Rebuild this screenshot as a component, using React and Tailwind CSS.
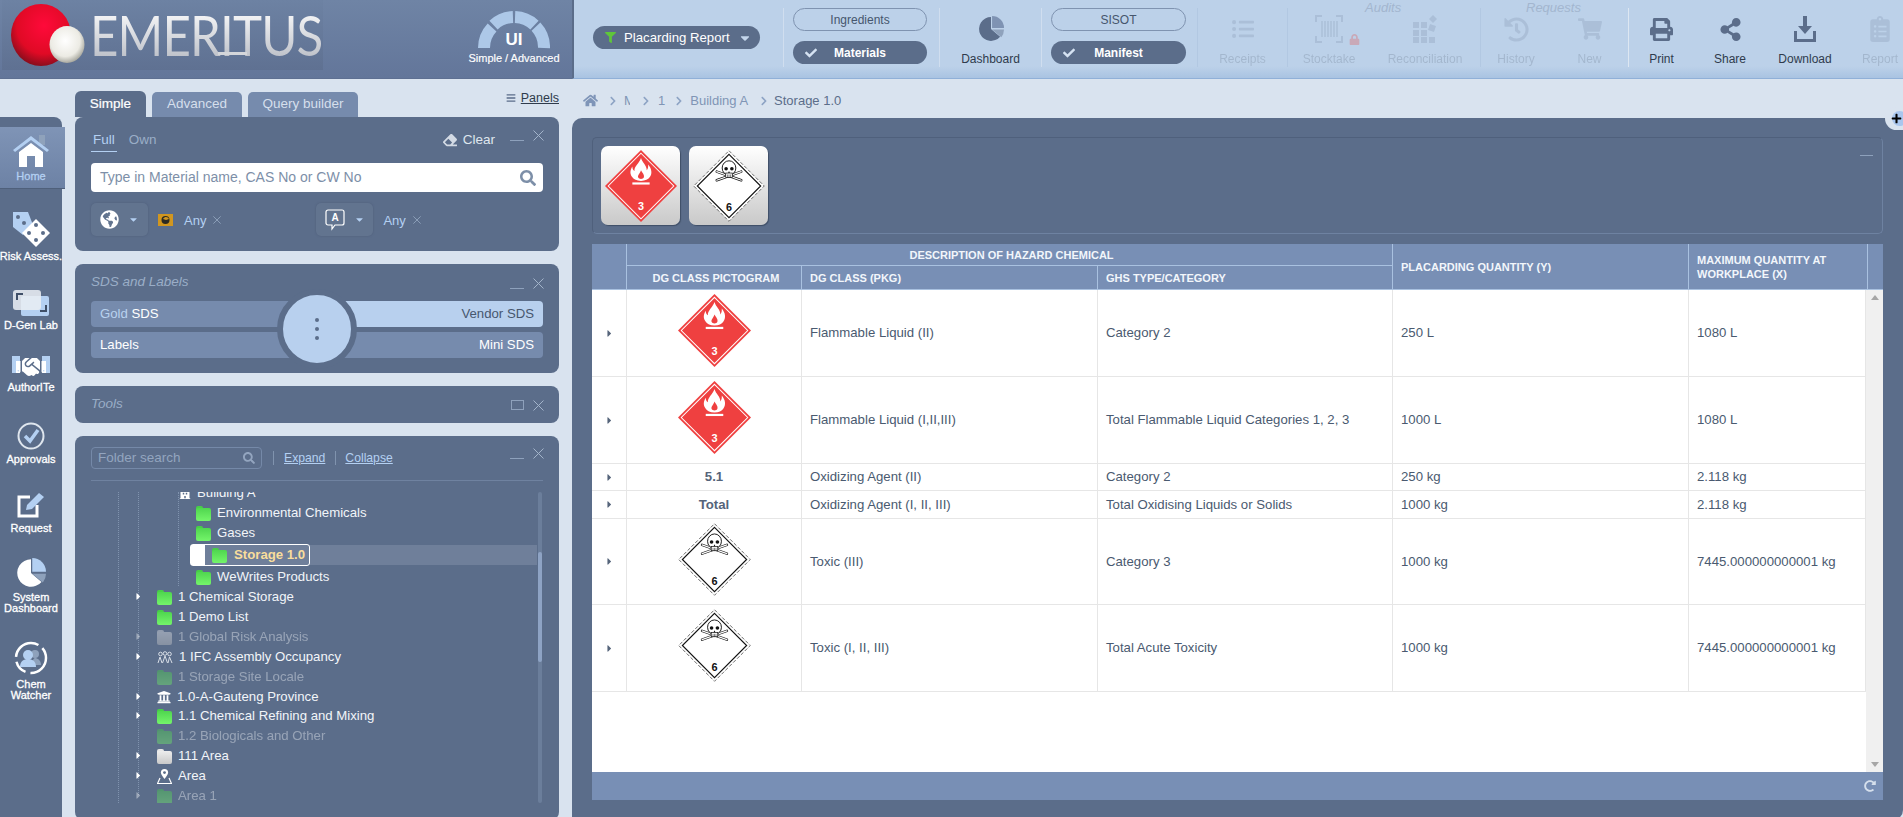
import {
  FaBars, FaBuilding, FaCaretDown, FaCaretRight, FaCheck, FaChevronRight, FaClipboardList, FaEraser, FaFilter,
  FaGlobeAmericas, FaHandshake, FaHistory, FaListUl, FaLock, FaPlus, FaPrint, FaRedoAlt, FaSearch,
  FaShareAlt, FaShoppingCart, FaUniversity, FaHome,
} from 'react-icons/fa';

function Cross({ size = 11, color = '#9db0c9', className = '' }) {
  return (
    <svg width={size} height={size} viewBox="0 0 11 11" className={`shrink-0 ${className}`}>
      <path d="M0.5 0.5L10.5 10.5M10.5 0.5L0.5 10.5" stroke={color} strokeWidth="1" fill="none" />
    </svg>
  );
}

function Pie({ size, main, a, b }) {
  return (
    <svg width={size} height={size} viewBox="0 0 24 24">
      <path d="M12 12V1A11 11 0 1 0 20.4 19.1Z" fill={main} />
      <path d="M13 11V0A11 11 0 0 1 24 11Z" fill={a} />
      <path d="M13 12.5H24A11 11 0 0 1 21.5 19.5Z" fill={b} />
    </svg>
  );
}

function Logo() {
  return (
    <div className="relative w-[321px] h-[70px] bg-gradient-to-b from-[#6d82a3] to-[#5f7192] shrink-0 ml-[2px]">
      <svg width="90" height="70" viewBox="0 0 90 70" className="absolute left-[5px] top-0">
        <defs>
          <radialGradient id="redBall" cx="55%" cy="35%" r="65%">
            <stop offset="0%" stopColor="#ff0a3a" />
            <stop offset="70%" stopColor="#e00a25" />
            <stop offset="100%" stopColor="#8c0d1c" />
          </radialGradient>
          <radialGradient id="whiteBall" cx="45%" cy="40%" r="65%">
            <stop offset="0%" stopColor="#ffffff" />
            <stop offset="65%" stopColor="#ecebe4" />
            <stop offset="100%" stopColor="#96968c" />
          </radialGradient>
        </defs>
        <ellipse cx="34" cy="35" rx="30" ry="31" fill="url(#redBall)" />
        <ellipse cx="60" cy="44.5" rx="17.5" ry="18.5" fill="url(#whiteBall)" />
      </svg>
      <span className="absolute left-[88px] top-[5px] font-['Lato'] font-normal text-[56px] leading-[60px] tracking-[-1px] origin-left scale-x-[0.88] text-transparent bg-clip-text bg-gradient-to-b from-white to-[#b5b9c2]">
        EMERITUS
      </span>
      <div className="absolute left-[216px] top-[52px] w-[29px] h-[3px] bg-[#d4d6da]" />
    </div>
  );
}

function Gauge() {
  return (
    <div className="relative w-[100px] h-[70px] flex flex-col items-center mr-[8px]">
      <svg width="72" height="40" viewBox="0 0 72 40" className="mt-[9px]">
        <g fill="none" stroke="#adc8e8" strokeWidth="12">
          <path d="M6 39A30 30 0 0 1 14.06 18.5" />
          <path d="M15.54 16.06A30 30 0 0 1 34.95 8.02" />
          <path d="M37.05 8.02A30 30 0 0 1 56.46 16.06" />
          <path d="M57.94 17.54A30 30 0 0 1 66 39" />
        </g>
      </svg>
      <span className="absolute top-[30px] text-[17px] leading-[20px] font-bold text-white">UI</span>
      <span className="absolute top-[51px] text-[11px] leading-[14px] text-white whitespace-nowrap [-webkit-text-stroke:0.15px_#fff]">Simple / Advanced</span>
    </div>
  );
}

function Sep({ faint, solid }) {
  return <div className={`w-px h-[59px] mt-[8px] shrink-0 ${faint ? 'bg-[#b2c8e2]' : solid ? 'bg-[#dde7f2]' : 'bg-[#d0deef]'}`} />;
}

function PillPair({ w, top, bottom }) {
  return (
    <div className={`flex flex-col gap-[10px] pt-[8px] shrink-0 ${w}`}>
      <div className="h-[23px] rounded-full border border-[#7f93b0] flex items-center justify-center text-[12px] text-[#46566d]">{top}</div>
      <div className="relative h-[23px] rounded-full bg-[#5b6d8a] flex items-center justify-center text-[12px] font-bold text-white">
        <FaCheck className="absolute left-[12px] text-[#d5e2f2]" size={12} />
        {bottom}
      </div>
    </div>
  );
}

function Tool({ w, label, icon, off }) {
  return (
    <div className={`flex flex-col items-center shrink-0 ${w} ${off ? 'opacity-[0.17]' : ''}`}>
      <div className="h-[26px] mt-[16px] flex items-center justify-center text-[#5b6d8a]">{icon}</div>
      <span className="mt-[10px] text-[12px] leading-[14px] text-[#2f3b4c] whitespace-nowrap">{label}</span>
    </div>
  );
}

function Header() {
  return (
    <div className="flex h-[79px] shrink-0">
      <div className="w-[572px] shrink-0 bg-gradient-to-b from-[#6f84a5] to-[#63769a] flex items-start justify-between border-b border-[#5e7092]">
        <Logo />
        <Gauge />
      </div>
      <div className="relative flex-1 min-w-0 flex overflow-hidden bg-gradient-to-b from-[#bcd1e9] from-85% to-[#a9c3e2] border-b border-[#90b0d8] border-l-2 border-l-[#5b6d8a]">
        <div className="ml-[19px] mr-[23px] mt-[26px] w-[167px] h-[23px] shrink-0 rounded-full bg-[#5b6d8a] flex items-center text-white text-[13.2px]">
          <FaFilter className="ml-[12px] mr-[8px] text-[#5fc63a]" size={11} />
          <span>Placarding Report</span>
          <FaCaretDown className="ml-[8px] text-[#c4d6ec]" size={14} />
        </div>
        <Sep />
        <div className="w-[9px] shrink-0" />
        <PillPair w="w-[134px]" top="Ingredients" bottom="Materials" />
        <div className="w-[12px] shrink-0" />
        <Sep />
        <Tool w="w-[101px]" label="Dashboard" icon={<Pie size={26} main="#5b6d8a" a="#7f93b3" b="#8fa2bc" />} />
        <Sep />
        <div className="w-[9px] shrink-0" />
        <PillPair w="w-[135px]" top="SISOT" bottom="Manifest" />
        <div className="w-[11px] shrink-0" />
        <Sep faint />
        <Tool off w="w-[89px]" label="Receipts" icon={<FaListUl size={22} />} />
        <Sep faint />
        <div className="relative flex">
          <span className="absolute left-[77px] top-0 text-[13px] leading-[15px] italic text-[#a3b6cf]">Audits</span>
          <div className="relative">
            <Tool
              off
              w="w-[82px]"
              label="Stocktake"
              icon={
                <svg width="28" height="28" viewBox="0 0 28 28" fill="none" stroke="currentColor">
                  <path d="M1 7V1h6M21 1h6v6M1 21v6h6M21 27h6v-6" strokeWidth="2" />
                  <path d="M7 6v16M10 6v16M13 6v16M16 6v16M19 6v16M22 6v16" strokeWidth="1.5" />
                </svg>
              }
            />
            <FaLock size={11} className="absolute left-[61px] top-[34px] text-[#c9a9b8]" />
          </div>
          <Tool
            off
            w="w-[110px]"
            label="Reconciliation"
            icon={
              <svg width="24" height="28" viewBox="0 0 24 28" fill="currentColor">
                <rect x="0" y="7" width="6" height="6" /><rect x="8" y="7" width="6" height="6" />
                <path d="M20 0l4 4-4 4-4-4z" /><path d="M17 9l6 2-2 6-6-2z" />
                <rect x="0" y="15" width="6" height="6" /><rect x="8" y="15" width="6" height="6" />
                <rect x="0" y="22" width="6" height="6" /><rect x="8" y="22" width="6" height="6" /><rect x="16" y="22" width="6" height="6" />
              </svg>
            }
          />
        </div>
        <Sep faint />
        <div className="relative flex">
          <span className="absolute left-[45px] top-0 text-[13px] leading-[15px] italic text-[#a3b6cf]">Requests</span>
          <Tool off w="w-[70px]" label="History" icon={<FaHistory size={25} />} />
          <Tool off w="w-[77px]" label="New" icon={<FaShoppingCart size={24} />} />
        </div>
        <Sep solid />
        <Tool w="w-[65px]" label="Print" icon={<FaPrint size={23} />} />
        <Tool w="w-[72px]" label="Share" icon={<FaShareAlt size={23} />} />
        <Tool
          w="w-[78px]"
          label="Download"
          icon={
            <svg width="22" height="26" viewBox="0 0 22 26" fill="#5b6d8a">
              <path d="M9 0h4v10h5l-7 8-7-8h5z" />
              <path d="M0 15h3v8h16v-8h3v11H0z" />
            </svg>
          }
        />
        <Tool off w="w-[72px]" label="Report" icon={<FaClipboardList size={26} />} />
      </div>
    </div>
  );
}

const RAIL = [
  {
    h: 'h-[73px]', label: 'Risk Assess.',
    icon: (
      <svg width="40" height="38" viewBox="0 0 40 38">
        <path d="M2 3h15l5 13-10 10L2 18z" fill="#b4d0f2" />
        <circle cx="7" cy="8" r="2" fill="#5b6d8a" />
        <circle cx="13" cy="14" r="2" fill="#5b6d8a" />
        <path d="M25 10l14 14-14 14-14-14z" fill="#fff" />
        <circle cx="25" cy="16" r="2" fill="#5b6d8a" />
        <circle cx="18" cy="24" r="2" fill="#5b6d8a" />
        <circle cx="32" cy="24" r="2" fill="#5b6d8a" />
        <circle cx="25" cy="31" r="2" fill="#5b6d8a" />
      </svg>
    ),
  },
  {
    h: 'h-[69px]', label: 'D-Gen Lab',
    icon: (
      <svg width="38" height="26" viewBox="0 0 38 26">
        <rect x="9" y="6" width="28" height="20" rx="2" fill="#b4d0f2" />
        <path d="M28 21h6v-6" stroke="#3f4f68" strokeWidth="2" fill="none" />
        <rect x="1" y="0" width="28" height="20" rx="3" fill="#e8edf3" fillOpacity="0.88" />
        <path d="M5 10V4h6" stroke="#3f4f68" strokeWidth="2" fill="none" />
      </svg>
    ),
  },
  {
    h: 'h-[62px]', label: 'AuthorITe',
    icon: (
      <div className="relative w-[38px] h-[22px] flex items-center justify-center">
        <div className="absolute left-0 top-0 w-[8px] h-[17px] bg-[#b4d0f2]" />
        <div className="absolute right-0 top-0 w-[8px] h-[17px] bg-[#b4d0f2]" />
        <FaHandshake size={30} className="relative text-white" />
      </div>
    ),
  },
  {
    h: 'h-[72px]', label: 'Approvals',
    icon: (
      <svg width="28" height="28" viewBox="0 0 28 28">
        <circle cx="14" cy="14" r="12.5" fill="none" stroke="#dfe6ee" strokeWidth="2" />
        <path d="M8 14l5 5 8-11" fill="none" stroke="#b4d0f2" strokeWidth="3.5" />
      </svg>
    ),
  },
  {
    h: 'h-[69px]', label: 'Request',
    icon: (
      <svg width="30" height="28" viewBox="0 0 30 28">
        <path d="M21 14v11H3V6h11" fill="none" stroke="#fff" strokeWidth="3" />
        <path d="M10 19l1-5L23 2l5 4-12 12z" fill="#b4d0f2" />
      </svg>
    ),
  },
  {
    h: 'h-[80px]', label: 'System Dashboard',
    icon: <Pie size={30} main="#ffffff" a="#b4d0f2" b="#8ea1bb" />,
  },
  {
    h: 'h-[87px]', label: 'Chem Watcher',
    icon: (
      <svg width="34" height="34" viewBox="0 0 34 34">
        <circle cx="17" cy="17" r="15" fill="none" stroke="#fff" strokeWidth="2.5" strokeDasharray="24 5 14 5 30 5" />
        <circle cx="21" cy="13" r="4" fill="#8ea1bb" />
        <path d="M18 24c0-5 2-7 3-7s6 1 6 7z" fill="#8ea1bb" />
        <circle cx="14" cy="14" r="5" fill="#b4d0f2" />
        <path d="M6 26c0-6 4-8 8-8s8 2 8 8z" fill="#b4d0f2" />
      </svg>
    ),
  },
];

function Rail() {
  return (
    <div className="w-[62px] h-[703px] mt-[38px] shrink-0 bg-[#5b6d8a] rounded-tr-[8px] pt-[10px]">
      <div className="w-[65px] h-[62px] bg-gradient-to-b from-[#7f94b6] to-[#6d82a5] border-b border-[#4f607b] flex flex-col items-center">
        <svg width="38" height="32" viewBox="0 0 38 32" className="mt-[8px] -ml-[3px]">
          <rect x="27" y="0" width="6" height="10" fill="#8fa2bb" />
          <path d="M1 15L19 1l18 14-2 2L19 5 3 17z" fill="#b4d0f2" />
          <path d="M7 17L19 8l12 9v15H23V21h-8v11H7z" fill="#fff" />
        </svg>
        <span className="mt-[3px] -ml-[3px] text-[11px] leading-[13px] text-[#b4d0f2] [-webkit-text-stroke:0.3px_#b4d0f2]">Home</span>
      </div>
      {RAIL.map(r => (
        <div key={r.label} className={`${r.h} flex flex-col items-center justify-end gap-1`}>
          {r.icon}
          <span className="w-[62px] flex justify-center text-center text-[11px] leading-[11px] text-white [-webkit-text-stroke:0.3px_#fff]">
            <span className={r.label === 'System Dashboard' || r.label === 'Chem Watcher' ? 'w-[56px]' : 'whitespace-nowrap'}>{r.label}</span>
          </span>
        </div>
      ))}
      <div className="h-[120px]" />
    </div>
  );
}

function PanelCtl({ kind = 'min', mt = '' }) {
  return (
    <div className={`flex items-start gap-[9px] -mr-[1px] ${mt}`}>
      {kind === 'min' ? <div className="w-[14px] h-px bg-[#8ea1bc] mt-[10px]" /> : <div className="w-[13px] h-[10px] border border-[#8ea1bc]" />}
      <Cross color="#a3b4ca" />
    </div>
  );
}

function Panel({ className, children }) {
  return <div className={`bg-[#5b6d8a] rounded-[8px] px-4 ${className}`}>{children}</div>;
}

function FilterBtn({ children }) {
  return (
    <div className="w-[57px] h-[33px] rounded-[5px] bg-[#62748f] shadow-[0_0_2px_#4d5d78] flex items-center justify-center gap-[9px] text-white">
      {children}
      <FaCaretDown size={11} className="text-[#b4d0f2]" />
    </div>
  );
}

function AnyChip() {
  return (
    <span className="inline-flex items-center">
      <span className="text-[13px] text-[#b4d0f2]">Any</span>
      <Cross size={8} className="ml-[7px]" />
    </span>
  );
}

function SearchPanel() {
  return (
    <Panel className="h-[134px] pt-[13px]">
      <div className="flex justify-between h-[22px]">
        <div className="flex text-[13.5px] leading-[20px]">
          <span className="px-[2px] h-[22px] border-b border-[#b4d0f2] text-[#b4d0f2]">Full</span>
          <span className="ml-[12px] text-[#9aadc7]">Own</span>
        </div>
        <div className="flex">
          <FaEraser size={14} className="mt-[3px] text-[#d3dae4]" />
          <span className="ml-[6px] text-[13.5px] leading-[20px] text-[#dfe6ee]">Clear</span>
          <div className="ml-[15px]"><PanelCtl /></div>
        </div>
      </div>
      <div className="mt-[11px] h-[29px] rounded-[4px] bg-white flex items-center justify-between pl-[9px] pr-[7px] text-[14px] text-[#7d8fa8]">
        <span>Type in Material name, CAS No or CW No</span>
        <FaSearch size={16} className="text-[#7d8fa8]" />
      </div>
      <div className="mt-[11px] flex h-[33px] items-center">
        <FilterBtn><FaGlobeAmericas size={19} /></FilterBtn>
        <svg width="15" height="12" viewBox="0 0 15 12" className="ml-[10px]">
          <rect width="15" height="12" fill="#d1961f" />
          <circle cx="7.5" cy="6" r="4" fill="#2c2a22" />
          <path d="M5 5c2-3 5-2 6 0l-3 1z" fill="#d1961f" />
        </svg>
        <span className="ml-[11px]"><AnyChip /></span>
        <span className="w-[95px]" />
        <FilterBtn>
          <svg width="20" height="22" viewBox="0 0 20 22" fill="none" stroke="#fff" strokeWidth="1.2">
            <path d="M3 1h14a2 2 0 0 1 2 2v11a2 2 0 0 1-2 2h-7l-3 4v-4H3a2 2 0 0 1-2-2V3a2 2 0 0 1 2-2z" />
            <text x="10" y="12" textAnchor="middle" fontSize="10" fontWeight="700" fill="#fff" stroke="none">A</text>
          </svg>
        </FilterBtn>
        <span className="ml-[10px]"><AnyChip /></span>
      </div>
    </Panel>
  );
}

function SdsPanel() {
  return (
    <Panel className="h-[109px] pt-[10px]">
      <div className="flex justify-between h-[16px]">
        <span className="text-[13.5px] leading-[16px] italic text-[#9aadc7]">SDS and Labels</span>
        <PanelCtl mt="mt-[4px]" />
      </div>
      <div className="relative mt-[11px] flex flex-col gap-[5px] text-[13.2px]">
        <div className="flex h-[26px] rounded-[4px] overflow-hidden">
          <div className="flex-1 bg-[#768bad] pl-[9px] leading-[26px]"><span className="text-[#b9d2ef]">Gold</span> <span className="text-white">SDS</span></div>
          <div className="flex-1 bg-[#b8d0ee] pr-[9px] leading-[26px] text-right text-[#47576e]">Vendor SDS</div>
        </div>
        <div className="flex h-[26px] rounded-[4px] overflow-hidden bg-[#768bad] justify-between px-[9px] leading-[26px] text-white">
          <span>Labels</span>
          <span>Mini SDS</span>
        </div>
        <div className="absolute left-[186px] top-[-12px] w-[80px] h-[80px] rounded-full bg-[#b8d0ee] border-[6px] border-[#5b6d8a] flex flex-col items-center justify-center gap-[5px]">
          <i className="block w-[4px] h-[4px] rounded-full bg-[#5b6d8a]" />
          <i className="block w-[4px] h-[4px] rounded-full bg-[#5b6d8a]" />
          <i className="block w-[4px] h-[4px] rounded-full bg-[#5b6d8a]" />
        </div>
      </div>
    </Panel>
  );
}

function Folder({ fill = 'green' }) {
  const tab = fill === 'green' ? 'bg-[#47cf47]' : 'bg-[#e6e6e6]';
  const bot = fill === 'green' ? 'bg-gradient-to-b from-[#4fd64f] to-[#74f56a]' : 'bg-gradient-to-b from-[#ededed] to-[#c9c9c9]';
  return (
    <div className="relative w-[15px] h-[15px] shrink-0">
      <div className={`absolute left-0 top-0 w-[7px] h-[4px] rounded-t-[2px] ${tab}`} />
      <div className={`absolute left-0 right-0 bottom-0 top-[2px] rounded-[2px] ${bot}`} />
    </div>
  );
}

function People() {
  return (
    <svg width="16" height="13" viewBox="0 0 16 13" fill="none" stroke="#d7dde6" strokeWidth="1" className="shrink-0">
      <circle cx="3.5" cy="3" r="1.8" /><circle cx="8" cy="2.5" r="1.8" /><circle cx="12.5" cy="3" r="1.8" />
      <path d="M1 12l2-6 2 6M5.5 12l2.5-7 2.5 7M11 12l1.5-6 2.5 6" />
    </svg>
  );
}

function AreaPin() {
  return (
    <svg width="15" height="15" viewBox="0 0 15 15" className="shrink-0">
      <path d="M7.5 0a3.6 3.6 0 0 1 3.6 3.6C11.1 6 7.5 10 7.5 10S3.9 6 3.9 3.6A3.6 3.6 0 0 1 7.5 0z" fill="#fff" />
      <circle cx="7.5" cy="3.6" r="1.4" fill="#5b6d8a" />
      <path d="M3 9L0.5 14.5h14L12 9" fill="none" stroke="#fff" strokeWidth="1.2" />
    </svg>
  );
}

const TREE = [
  { text: 'Building A', lvl: 2, h: 'h-[20px]', icon: <FaBuilding size={12} className="text-white shrink-0" />, pl: 'pl-[88px]' },
  { text: 'Environmental Chemicals', lvl: 3, icon: <Folder /> },
  { text: 'Gases', lvl: 3, icon: <Folder /> },
  { text: 'Storage 1.0', lvl: 3, selected: true, icon: <Folder /> },
  { text: 'WeWrites Products', lvl: 3, icon: <Folder /> },
  { text: '1 Chemical Storage', arrow: true, icon: <Folder /> },
  { text: '1 Demo List', icon: <Folder /> },
  { text: '1 Global Risk Analysis', arrow: true, off: true, icon: <Folder fill="white" /> },
  { text: '1 IFC Assembly Occupancy', arrow: true, icon: <People /> },
  { text: '1 Storage Site Locale', off: true, icon: <Folder /> },
  { text: '1.0-A-Gauteng Province', arrow: true, h: 'h-[19px]', icon: <FaUniversity size={14} className="text-white shrink-0" /> },
  { text: '1.1 Chemical Refining and Mixing', arrow: true, icon: <Folder /> },
  { text: '1.2 Biologicals and Other', off: true, icon: <Folder /> },
  { text: '111 Area', arrow: true, icon: <Folder fill="white" /> },
  { text: 'Area', arrow: true, icon: <AreaPin /> },
  { text: 'Area 1', arrow: true, off: true, icon: <Folder /> },
];

function TreeRow({ row }) {
  if (row.selected) {
    return (
      <div className="relative h-[24px] flex items-center">
        <div className="absolute left-[99px] right-0 top-[2px] h-[20px] bg-[#6f7f9a]" />
        <div className="relative ml-[99px] h-[22px] w-[120px] rounded-[3px] border border-white flex items-center">
          <div className="w-[14px] h-full bg-white" />
          <div className="ml-[7px]">{row.icon}</div>
          <span className="ml-[7px] font-bold text-[#f9dd9c]">{row.text}</span>
        </div>
      </div>
    );
  }
  const indent = row.lvl === 3 ? 'pl-[105px]' : row.pl || 'pl-[66px]';
  return (
    <div className={`relative ${row.h || 'h-[20px]'} flex items-center gap-[6px] ${indent} ${row.off ? 'opacity-40' : ''}`}>
      {row.arrow && <FaCaretRight size={11} className="absolute left-[42px] top-[4px] text-white" />}
      {row.icon}
      <span className="text-[#f2f5f9] whitespace-nowrap">{row.text}</span>
    </div>
  );
}

function TreePanel() {
  return (
    <Panel className="h-[384px] pt-[11px]">
      <div className="flex items-start justify-between h-[22px]">
        <div className="flex items-center text-[13.5px]">
          <div className="w-[171px] h-[22px] rounded-[4px] border border-[#7589a8] flex items-center justify-between px-[6px] text-[#93a5bf]">
            <span>Folder search</span>
            <FaSearch size={12} />
          </div>
          <div className="w-px h-[14px] bg-[#8093ae] ml-[11px]" />
          <span className="ml-[10px] text-[12.2px] underline text-[#b4d0f2]">Expand</span>
          <div className="w-px h-[14px] bg-[#8093ae] ml-[10px]" />
          <span className="ml-[9px] text-[12.2px] underline text-[#b4d0f2]">Collapse</span>
        </div>
        <PanelCtl mt="mt-[1px]" />
      </div>
      <div className="mt-[11px] h-px bg-[#6f82a0]" />
      <div className="relative mt-[11px] h-[311px] overflow-hidden text-[13.2px]">
        <div className="absolute left-[27px] top-0 bottom-0 border-l border-dotted border-[#8093ae]" />
        <div className="absolute left-[47px] top-0 bottom-[8px] border-l border-dotted border-[#8093ae]" />
        <div className="absolute left-[87px] top-0 h-[94px] border-l border-dotted border-[#8093ae]" />
        <div className="absolute right-[1px] top-0 bottom-0 w-[4px] rounded-full bg-[#6b7e9b]" />
        <div className="absolute right-[1px] top-[60px] h-[110px] w-[4px] rounded-full bg-[#8ea3c4]" />
        <div className="mt-[-9px] mr-[6px]">
          {TREE.map(r => <TreeRow key={r.text} row={r} />)}
        </div>
      </div>
    </Panel>
  );
}

function Flame({ c, inner }) {
  return (
    <g>
      <path fill={c} d="M50 11C52 18 58 21 58 28 60 26 60 23 60 20 65 26 66 33 62 38 60 41 56 43 50 43 44 43 40 41 38 38 34 33 35 28 38 23 38 26 39 28 41 29 40 23 48 18 50 11Z" />
      <path fill={inner} d="M50 28C52 32 55 34 54 38 53 41 47 41 46 38 45 35 49 32 50 28Z" />
    </g>
  );
}

function Skull() {
  return (
    <g>
      <g strokeLinecap="round" fill="none">
        <path d="M33 30l34 12M67 30L33 42" stroke="#111" strokeWidth="3.4" />
        <path d="M33 30l34 12M67 30L33 42" stroke="#fff" strokeWidth="1.6" />
      </g>
      <ellipse cx="50" cy="25" rx="9.5" ry="10" fill="#fff" stroke="#111" strokeWidth="1.3" />
      <rect x="45.5" y="32" width="9" height="6" fill="#fff" stroke="#111" strokeWidth="1" />
      <circle cx="46" cy="26" r="2.5" fill="#111" />
      <circle cx="54" cy="26" r="2.5" fill="#111" />
      <path d="M50 29l-1.2 3h2.4z" fill="#111" />
      <path d="M48 34v4M50 34v4M52 34v4" stroke="#111" strokeWidth="0.7" />
    </g>
  );
}

function Placard({ type, size = 73 }) {
  if (type === 'fire') {
    return (
      <svg width={size} height={size} viewBox="0 0 100 100" className="block">
        <path d="M50 0L100 50 50 100 0 50z" fill="#ef4040" />
        <path d="M50 4.5L95.5 50 50 95.5 4.5 50z" fill="none" stroke="#fff" strokeWidth="1.4" />
        <Flame c="#fff" inner="#ef4040" />
        <rect x="38" y="45" width="24" height="3" fill="#fff" />
        <text x="50" y="84" textAnchor="middle" fontSize="15" fontWeight="700" fill="#fff" fontFamily="Liberation Sans, sans-serif">3</text>
      </svg>
    );
  }
  return (
    <svg width={size} height={size} viewBox="0 0 100 100" className="block">
      <path d="M50 1L99 50 50 99 1 50z" fill="#fff" stroke="#333" strokeWidth="1" strokeDasharray="5 2.5" />
      <path d="M50 6L94 50 50 94 6 50z" fill="#fff" stroke="#111" strokeWidth="1.6" />
      <Skull />
      <text x="50" y="85" textAnchor="middle" fontSize="15" fontWeight="700" fill="#111" fontFamily="Liberation Sans, sans-serif">6</text>
    </svg>
  );
}

function Crumbs() {
  const sep = <FaChevronRight size={10} className="text-[#8da3c4] shrink-0" />;
  return (
    <div className="h-[39px] flex items-center pl-[11px] pt-[4px] text-[13px] text-[#8095b5]">
      <FaHome size={15} className="text-[#7f95b8]" />
      <span className="ml-[10px]">{sep}</span>
      <span className="ml-[6px] w-[6px] overflow-hidden">M</span>
      <span className="ml-[11px]">{sep}</span>
      <span className="ml-[7px]">1</span>
      <span className="ml-[9px]">{sep}</span>
      <span className="ml-[6px]">Building A</span>
      <span className="ml-[11px]">{sep}</span>
      <span className="ml-[5px] text-[#5b6d8a]">Storage 1.0</span>
    </div>
  );
}

const ROWS = [
  { h: 'h-[87px]', pic: 'fire', cls: 'Flammable Liquid (II)', ghs: 'Category 2', y: '250 L', x: '1080 L' },
  { h: 'h-[87px]', pic: 'fire', cls: 'Flammable Liquid (I,II,III)', ghs: 'Total Flammable Liquid Categories 1, 2, 3', y: '1000 L', x: '1080 L' },
  { h: 'h-[27px]', lbl: '5.1', cls: 'Oxidizing Agent (II)', ghs: 'Category 2', y: '250 kg', x: '2.118 kg' },
  { h: 'h-[28px]', lbl: 'Total', cls: 'Oxidizing Agent (I, II, III)', ghs: 'Total Oxidising Liquids or Solids', y: '1000 kg', x: '2.118 kg' },
  { h: 'h-[86px]', pic: 'toxic', cls: 'Toxic (III)', ghs: 'Category 3', y: '1000 kg', x: '7445.000000000001 kg' },
  { h: 'h-[87px]', pic: 'toxic', cls: 'Toxic (I, II, III)', ghs: 'Total Acute Toxicity', y: '1000 kg', x: '7445.000000000001 kg' },
];

function Cell({ children }) {
  return <div className="flex items-center pl-[8px] border-r border-[#e6e6e6] whitespace-nowrap">{children}</div>;
}

function HazardTable() {
  const th = 'flex items-center pl-[8px] pr-[4px] border-r border-[#a9c1e0] text-[11px] leading-[14px] font-bold text-[#f2f6fb] uppercase';
  return (
    <div className="mt-[10px] h-[556px] flex flex-col">
      <div className="grid grid-cols-[35px_175px_296px_295px_296px_179px_15px] grid-rows-[22px_23px] h-[46px] bg-[#788fb5] border-b border-[#a9c1e0]">
        <div className="row-span-2 border-r border-[#a9c1e0]" />
        <div className={`col-span-3 justify-center border-b ${th}`}>Description of Hazard Chemical</div>
        <div className={`row-span-2 ${th}`}>Placarding Quantity (Y)</div>
        <div className={`row-span-2 ${th}`}>Maximum Quantity at Workplace (X)</div>
        <div className="row-span-2" />
        <div className={`justify-center ${th}`}>DG Class Pictogram</div>
        <div className={th}>DG Class (PKG)</div>
        <div className={th}>GHS Type/Category</div>
      </div>
      <div className="flex-1 flex bg-white min-h-0">
        <div className="flex-1 text-[13.2px] text-[#4a5a70]">
          {ROWS.map(r => (
            <div key={r.cls} className={`grid grid-cols-[35px_175px_296px_295px_296px_177px] border-b border-[#e6e6e6] ${r.h}`}>
              <div className="flex items-center justify-center border-r border-[#e6e6e6]">
                <FaCaretRight size={11} className="text-[#55647a]" />
              </div>
              <div className="flex items-center justify-center border-r border-[#e6e6e6] font-bold text-[#55647a]">
                {r.pic ? <div className="mb-[5px]"><Placard type={r.pic} /></div> : r.lbl}
              </div>
              <Cell>{r.cls}</Cell>
              <Cell>{r.ghs}</Cell>
              <Cell>{r.y}</Cell>
              <Cell>{r.x}</Cell>
            </div>
          ))}
        </div>
        <div className="w-[17px] bg-[#f0f0f0] flex flex-col items-center justify-between py-[5px] text-[#a6a6a6]">
          <svg width="8" height="5" viewBox="0 0 8 5" fill="currentColor"><path d="M4 0l4 5H0z" /></svg>
          <svg width="8" height="5" viewBox="0 0 8 5" fill="currentColor"><path d="M4 5l4-5H0z" /></svg>
        </div>
      </div>
      <div className="h-[28px] bg-[#788fb5] flex items-center justify-end pr-[7px]">
        <FaRedoAlt size={12} className="text-[#d5dfec]" />
      </div>
    </div>
  );
}

function Main() {
  return (
    <div className="flex-1 min-w-0 ml-[13px] relative">
      <Crumbs />
      <div className="h-[702px] bg-[#5b6d8a] rounded-tl-[10px] rounded-br-[10px] pl-[20px] pr-[20px] pt-[19px]">
        <div className="h-[97px] rounded-[5px] border border-[#4f607c] border-b-[#6e82a1] border-r-[#6e82a1] flex gap-[9px] pl-[8px] pt-[8px] relative">
          <div className="w-[79px] h-[79px] rounded-[7px] bg-gradient-to-b from-white to-[#c9c9c9] flex items-center justify-center shadow-[1px_1px_1px_#3f4e66]">
            <Placard type="fire" size={72} />
          </div>
          <div className="w-[79px] h-[79px] rounded-[7px] bg-gradient-to-b from-white to-[#c9c9c9] flex items-center justify-center shadow-[1px_1px_1px_#3f4e66]">
            <Placard type="toxic" size={72} />
          </div>
          <div className="absolute right-[9px] top-[17px] w-[13px] h-px bg-[#8ea1bc]" />
        </div>
        <HazardTable />
      </div>
      <div className="absolute right-0 top-[28px] w-[18px] h-[23px] bg-[#d9e3ef] rounded-l-full flex items-center pl-[7px]">
        <div className="w-[15px] h-[15px] rounded-full bg-[#a9c6ee] flex items-center shrink-0 text-black">
          <FaPlus size={11} className="-ml-[1px]" />
        </div>
      </div>
    </div>
  );
}

export default function App() {
  return (
    <div className="w-[1903px] h-[817px] overflow-hidden bg-[#d9e3ef] flex flex-col font-['Liberation_Sans',sans-serif]">
      <Header />
      <div className="flex flex-1 min-h-0">
        <Rail />
        <div className="w-[484px] ml-[13px] shrink-0 pt-[12px]">
          <div className="flex justify-between items-end h-[26px] text-[13.5px]">
            <div className="flex gap-[6px] items-end h-full">
              <div className="w-[71px] h-[26px] rounded-t-[6px] bg-[#5b6d8a] text-white [-webkit-text-stroke:0.2px_#fff] flex items-center justify-center">Simple</div>
              <div className="w-[90px] h-[25px] rounded-t-[5px] bg-[#768bad] text-[#d5dfec] flex items-center justify-center">Advanced</div>
              <div className="w-[110px] h-[25px] rounded-t-[5px] bg-[#768bad] text-[#d5dfec] flex items-center justify-center">Query builder</div>
            </div>
            <div className="self-start flex items-center gap-[5px] mt-[-2px] text-[12.5px] text-[#2f3b4c]">
              <FaBars size={10} className="text-[#5b6d8a]" />
              <span className="underline">Panels</span>
            </div>
          </div>
          <div className="flex flex-col gap-[13px]">
            <SearchPanel />
            <SdsPanel />
            <Panel className="h-[37px] pt-[10px]">
              <div className="flex justify-between h-[16px]">
                <span className="text-[13.5px] leading-[16px] italic text-[#9aadc7]">Tools</span>
                <PanelCtl kind="max" mt="mt-[4px]" />
              </div>
            </Panel>
            <TreePanel />
          </div>
        </div>
        <Main />
      </div>
    </div>
  );
}
